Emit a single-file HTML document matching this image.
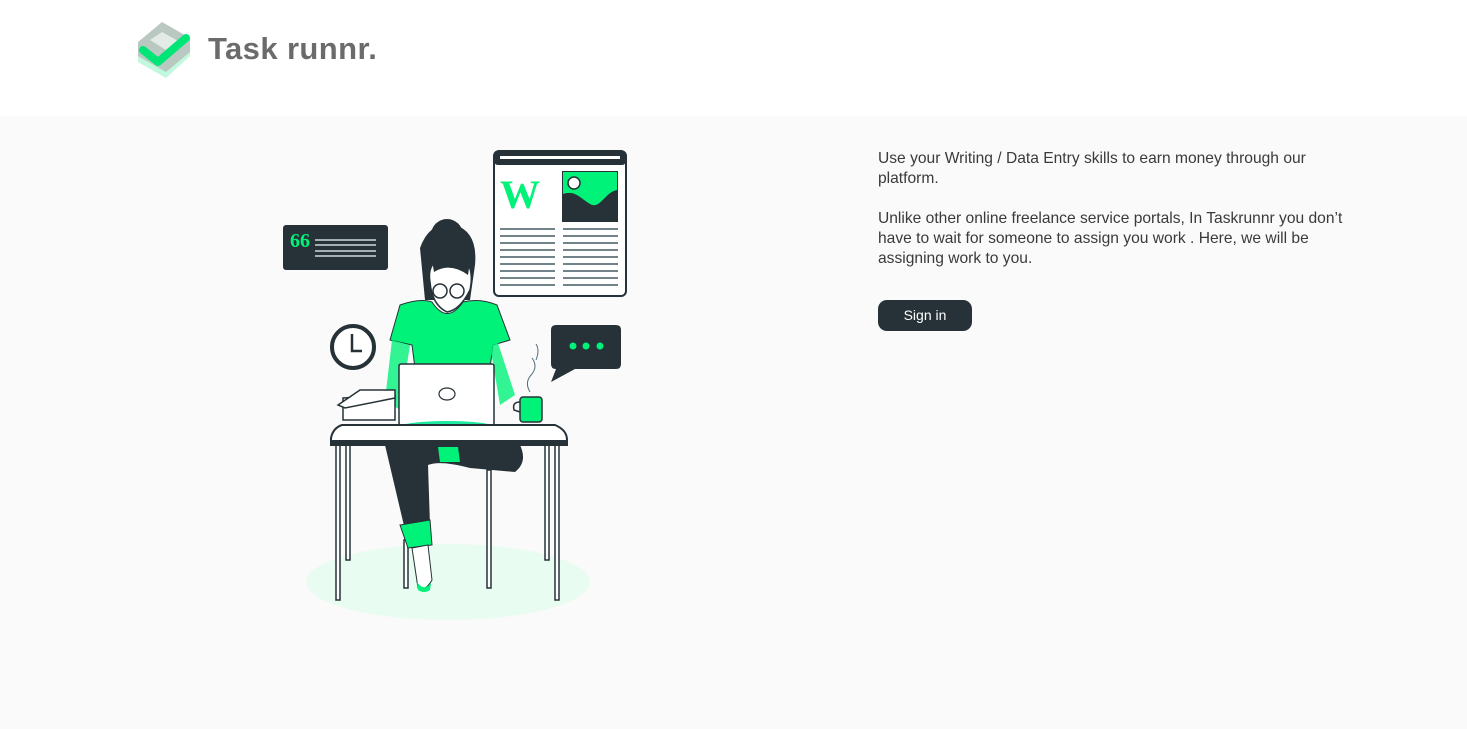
<!DOCTYPE html>
<html><head><meta charset="utf-8"><style>
body{margin:0;width:1467px;height:729px;background:#fafafa;font-family:"Liberation Sans",sans-serif;overflow:hidden;position:relative}
.hdr{position:absolute;left:0;top:0;width:1467px;height:116px;background:#fff}
.logo{position:absolute;left:208px;top:31px;font-size:31px;font-weight:bold;color:#6b6b6b;letter-spacing:0.4px}
.txt{position:absolute;left:878px;top:149px;width:480px;font-size:15.6px;line-height:20px;color:#3a3a3a}
.txt p{margin:0 0 20px}
.btn{position:absolute;left:878px;top:300px;width:94px;height:31px;border-radius:9px;background:#263238;color:#fff;font-size:14px;line-height:31px;text-align:center}
</style></head><body>
<div class="hdr">
<svg style="position:absolute;left:136px;top:20px" width="58" height="62" viewBox="0 0 58 62">
<path d="M2 28 L26 6 L54 22 L54 36 L30 58 L2 42 Z" fill="#a8f5cf" opacity=".7"/>
<path d="M2 22 L26 2 L54 18 L54 32 L30 52 L2 36 Z" fill="#b9c9c2"/>
<path d="M14 20 L26 12 L42 21 L30 30Z" fill="#e3ebe7"/>
<path d="M7 30 L22 42 L50 18" fill="none" stroke="#00e676" stroke-width="8" stroke-linecap="round" stroke-linejoin="round"/>
</svg>
<div class="logo">Task runnr.</div>
</div>
<svg style="position:absolute;left:0;top:0" width="700" height="729">
<ellipse cx="448" cy="582" rx="142" ry="38" fill="#e8fcf2"/>
<rect x="494" y="151" width="132" height="145" rx="5" fill="#fff" stroke="#263238" stroke-width="2"/>
<rect x="494" y="151" width="132" height="14" rx="4" fill="#263238"/>
<rect x="500" y="156" width="120" height="3" fill="#fff"/>
<text x="500" y="208" font-family="Liberation Serif" font-weight="bold" font-size="40" fill="#00f279">W</text>
<rect x="562" y="171" width="56" height="51" fill="#263238"/>
<path d="M563 172 H617 V190 C605 192 600 210 590 204 C580 198 575 190 563 194 Z" fill="#00f279"/>
<circle cx="574" cy="183" r="6" fill="#fff" stroke="#263238" stroke-width="1.5"/>
<g stroke="#455a64" stroke-width="1.6">
<path d="M500 229H555M500 236H555M500 243H555M500 250H555M500 257H555M500 264H555M500 271H555M500 278H555M500 285H555"/>
<path d="M563 229H618M563 236H618M563 243H618M563 250H618M563 257H618M563 264H618M563 271H618M563 278H618M563 285H618"/>
</g>
<rect x="283" y="225" width="105" height="45" rx="3" fill="#263238"/>
<text x="290" y="247" font-family="Liberation Serif" font-size="20" font-weight="bold" fill="#00f279">66</text>
<g stroke="#cfd8dc" stroke-width="1.5"><path d="M315 240H376M315 245H376M315 251H376M315 256H376"/></g>
<path d="M556 325 H616 Q621 325 621 330 V364 Q621 369 616 369 H575 L551 382 L556 369 Q551 369 551 364 V330 Q551 325 556 325Z" fill="#263238"/>
<circle cx="573" cy="346" r="3.5" fill="#00f279"/><circle cx="586" cy="346" r="3.5" fill="#00f279"/><circle cx="600" cy="346" r="3.5" fill="#00f279"/>
<circle cx="353" cy="347" r="21" fill="#fff" stroke="#263238" stroke-width="4"/>
<path d="M352 334 V351 H362" fill="none" stroke="#263238" stroke-width="2.5"/>
<g stroke="#263238" stroke-width="1.5" fill="#fff">
<rect x="336" y="445" width="4" height="155"/><rect x="346" y="445" width="4" height="115"/>
<rect x="555" y="445" width="4" height="155"/><rect x="545" y="445" width="4" height="115"/>
<rect x="404" y="540" width="4" height="48"/><rect x="487" y="470" width="4" height="118"/>
</g>
<path d="M385 445 L520 445 Q528 462 515 472 L470 468 Q440 460 428 465 L430 525 L405 530 Z" fill="#263238"/>
<path d="M400 525 L430 520 L432 545 L408 548 Z" fill="#00f279" stroke="#263238"/>
<path d="M412 548 L428 545 L432 580 Q425 592 418 588 Z" fill="#fff" stroke="#263238"/>
<path d="M417 582 Q424 592 431 583 L430 590 Q424 594 418 590Z" fill="#00f279"/>
<path d="M438 447 L458 447 L460 462 L440 462Z" fill="#00f279"/>
<path d="M420 248 Q430 220 455 225 Q478 232 475 265 L470 300 L425 300 Z" fill="#263238"/>
<circle cx="447" cy="235" r="16" fill="#263238"/>
<path d="M430 282 Q427 265 440 258 L466 260 Q474 272 470 290 Q460 310 447 312 Q432 305 430 282Z" fill="#fff" stroke="#263238" stroke-width="1.5"/>
<path d="M432 260 Q450 250 470 262 L468 275 Q450 262 434 272Z" fill="#263238"/>
<circle cx="440" cy="291" r="7" fill="none" stroke="#263238" stroke-width="1.5"/><circle cx="457" cy="291" r="7" fill="none" stroke="#263238" stroke-width="1.5"/>
<path d="M400 305 Q420 298 432 302 Q447 325 463 302 Q480 298 497 305 L510 340 L493 345 L490 368 L415 368 L412 345 L390 340 Z" fill="#00f279" stroke="#263238" stroke-width="1"/>
<path d="M392 340 L385 400 L400 410 L410 345Z M497 340 L515 395 L500 405 L490 345Z" fill="#00f279" opacity=".8"/>
<rect x="399" y="364" width="95" height="61" rx="2" fill="#fff" stroke="#263238" stroke-width="1.5"/>
<ellipse cx="447" cy="394" rx="8" ry="6" fill="#fff" stroke="#263238" stroke-width="1.2"/>
<ellipse cx="447" cy="427" rx="47" ry="6" fill="#1de9a0"/>
<path d="M343 398 L395 395 L395 420 L343 420Z" fill="#fff" stroke="#263238" stroke-width="1.5"/>
<path d="M338 405 L360 390 L395 390 L395 398 L345 408Z" fill="#fff" stroke="#263238" stroke-width="1.5"/>
<rect x="520" y="397" width="22" height="25" rx="3" fill="#00f279" stroke="#263238" stroke-width="1.5"/>
<path d="M520 402 Q512 402 514 410 L520 412" fill="none" stroke="#263238" stroke-width="1.5"/>
<path d="M530 392 Q524 382 532 374 Q538 366 532 358 M536 360 Q540 350 536 344" fill="none" stroke="#546e7a" stroke-width="1"/>
<path d="M342 425 L555 425 Q567 430 567 440 L567 445 L331 445 L331 438 Q333 428 342 425Z" fill="#fff" stroke="#263238" stroke-width="2"/>
<rect x="331" y="440" width="236" height="5" rx="2" fill="#263238"/>
</svg>
<div class="txt">
<p>Use your Writing / Data Entry skills to earn money through our platform.</p>
<p>Unlike other online freelance service portals, In Taskrunnr you don’t have to wait for someone to assign you work . Here, we will be assigning work to you.</p>
</div>
<div class="btn">Sign in</div>
</body></html>
